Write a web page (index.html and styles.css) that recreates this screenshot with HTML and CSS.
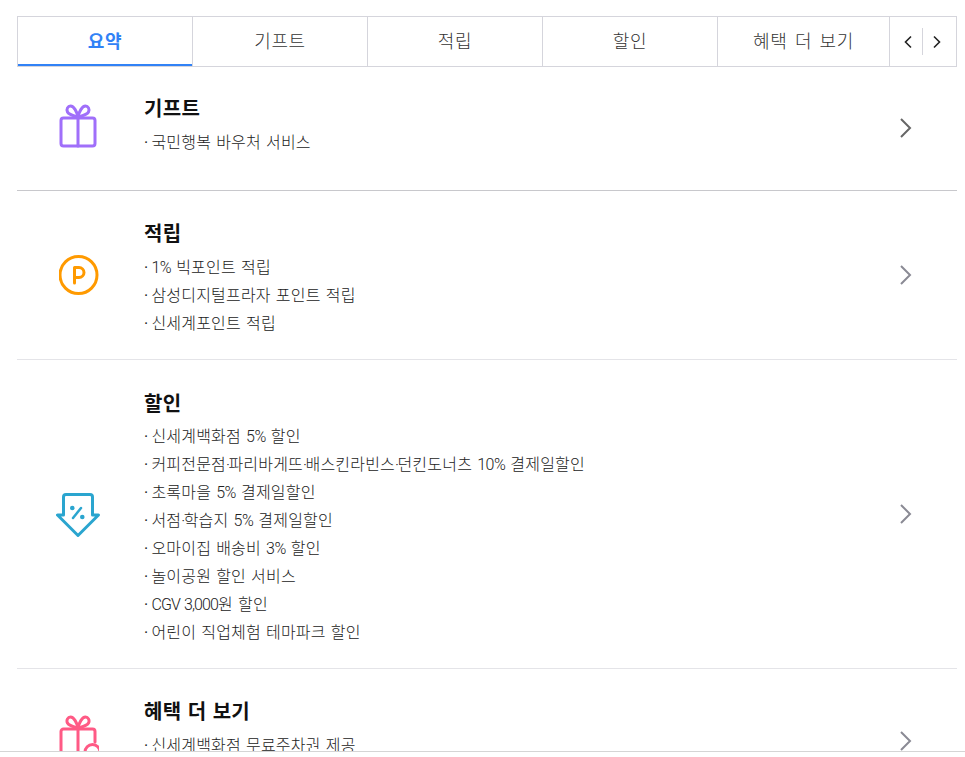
FILE: index.html
```html
<!DOCTYPE html>
<html lang="ko">
<head>
<meta charset="utf-8">
<title>혜택</title>
<link rel="stylesheet" href="styles.css">
</head>
<body>
<main class="page">
  <nav class="tabs">
    <a class="tab active">요약</a>
    <a class="tab">기프트</a>
    <a class="tab">적립</a>
    <a class="tab">할인</a>
    <a class="tab">혜택 더 보기</a>
    <div class="pager">
      <svg class="pager-icon" viewBox="0 0 10 14"><path d="M8 1.500 2.500 7 8 12.500"/></svg>
      <span class="pager-sep"></span>
      <svg class="pager-icon" viewBox="0 0 10 14"><path d="M2 1.500 7.500 7 2 12.500"/></svg>
    </div>
  </nav>

  <section class="item item-gift">
    <svg class="icon" viewBox="0 0 40 46"><g class="st-purple"><rect x="2" y="15" width="34" height="28" rx="2.5"/><path d="M19 15v28M19 14c-3-1-9-2-10.500-5C7 6 9 3 11.500 3 15 3 18 9 19 14c1-5 4-11 7.500-11C29 3 31 6 29.500 9 28 12 22 13 19 14z"/></g></svg>
    <div class="body">
      <h2 class="title">기프트</h2>
      <ul class="list"><li>국민행복 바우처 서비스</li></ul>
    </div>
    <svg class="chev dark" viewBox="0 0 14 22"><path d="M2 2l9 9-9 9"/></svg>
  </section>

  <section class="item item-save">
    <svg class="icon" viewBox="0 0 40 46"><g class="st-orange"><circle cx="19.500" cy="23" r="18.500"/><path d="M15.500 31V15.500H20a5 5 0 0 1 0 10h-4.500"/></g></svg>
    <div class="body">
      <h2 class="title">적립</h2>
      <ul class="list">
        <li><span class="lat">1%</span> 빅포인트 적립</li>
        <li>삼성디지털프라자 포인트 적립</li>
        <li>신세계포인트 적립</li>
      </ul>
    </div>
    <svg class="chev" viewBox="0 0 14 22"><path d="M2 2l9 9-9 9"/></svg>
  </section>

  <section class="item item-sale">
    <svg class="icon" viewBox="0 0 44 46"><g class="st-blue"><path d="M7.500 24V6A2.500 2.500 0 0 1 10 3.500h24A2.500 2.500 0 0 1 36.500 6v18h6L22 44.500 1.500 24z"/><path class="pct" d="M25 17 17 27"/></g><circle class="dot" cx="16.300" cy="17" r="2.300"/><circle class="dot" cx="26.300" cy="26" r="2.300"/></svg>
    <div class="body">
      <h2 class="title">할인</h2>
      <ul class="list">
        <li>신세계백화점 <span class="lat">5%</span> 할인</li>
        <li>커피전문점<span class="mid">·</span>파리바게뜨<span class="mid">·</span>배스킨라빈스<span class="mid">·</span>던킨도너츠 <span class="lat">10%</span> 결제일할인</li>
        <li>초록마을 <span class="lat">5%</span> 결제일할인</li>
        <li>서점<span class="mid">·</span>학습지 <span class="lat">5%</span> 결제일할인</li>
        <li>오마이집 배송비 <span class="lat">3%</span> 할인</li>
        <li>놀이공원 할인 서비스</li>
        <li><span class="lat-tight">CGV 3,000</span>원 할인</li>
        <li>어린이 직업체험 테마파크 할인</li>
      </ul>
    </div>
    <svg class="chev" viewBox="0 0 14 22"><path d="M2 2l9 9-9 9"/></svg>
  </section>

  <section class="item item-more">
    <svg class="icon" viewBox="0 0 40 46"><g class="st-pink"><path d="M22 43H4.500A2.500 2.500 0 0 1 2 40.500V17.500A2.500 2.500 0 0 1 4.500 15h29a2.500 2.500 0 0 1 2.500 2.500V28"/><path d="M19 15v28M19 14c-3-1-9-2-10.500-5C7 6 9 3 11.500 3 15 3 18 9 19 14c1-5 4-11 7.500-11C29 3 31 6 29.500 9 28 12 22 13 19 14z"/><circle cx="33.500" cy="38" r="7.500"/></g></svg>
    <div class="body">
      <h2 class="title">혜택 더 보기</h2>
      <ul class="list"><li>신세계백화점 무료주차권 제공</li></ul>
    </div>
    <svg class="chev" viewBox="0 0 14 22"><path d="M2 2l9 9-9 9"/></svg>
  </section>
</main>
<div class="bottom-bar"></div>
</body>
</html>
```

FILE: styles.css
```css
* { box-sizing: border-box; }
html, body { margin: 0; height: 100%; overflow: hidden; background: #fff; }
body { font-family: Roboto, "Noto Sans CJK KR", sans-serif; color: #222; }
.page { padding: 16px 8px 0 17px; }

.tabs {
  display: flex;
  height: 51px;
  border: 1px solid #d5d5dc;
}
.tab {
  width: 175px;
  display: flex;
  align-items: center;
  justify-content: center;
  padding-bottom: 4px;
  border-right: 1px solid #d5d5dc;
  font-size: 18px;
  font-weight: 300;
  color: #333;
  letter-spacing: 0.6px;
  word-spacing: 2.5px;
}
.tab.active {
  color: #3182f6;
  font-weight: 700;
  box-shadow: inset 0 -2px 0 #3182f6;
}
.tab:nth-child(5) { width: 172px; }
.pager { flex: 1; display: flex; align-items: center; justify-content: center; gap: 9px; padding-right: 1px; }
.pager-icon { width: 10px; height: 14px; fill: none; stroke: #222; stroke-width: 1.6; }
.pager-sep { width: 1px; height: 27px; background: #d5d5dc; }

.item {
  display: flex;
  align-items: center;
  width: 940px;
  border-bottom: 1px solid #e4e4e8;
}
.item-gift { height: 124px; align-items: flex-start; border-bottom-color: #c8c8cc; }
.item-save { height: 169px; }
.item-sale { height: 309px; }
.item-more { height: 120px; align-items: flex-start; border-bottom: 0; }
.icon { flex: none; width: 40px; height: 46px; margin-left: 42px; }
.item-sale .icon { width: 44px; margin-left: 39px; }
.item-gift .icon { margin-top: 36px; }
.item-more .icon { margin-top: 45px; }
.icon g { fill: none; stroke-width: 3; stroke-linecap: round; stroke-linejoin: round; }
.icon .pct { stroke-width: 2.5; }
.st-purple { stroke: #a06ffa; }
.st-orange { stroke: #ff9a00; }
.st-blue { stroke: #2aa5cf; }
.st-pink { stroke: #ff5a85; }
.dot { fill: #2aa5cf; }
.body { flex: 1; margin-left: 45px; }
.item-sale .body { margin-left: 44px; }
.item-gift .body { padding-top: 28px; }
.item-save .body { padding-top: 8px; }
.item-sale .body { padding-top: 9px; }
.item-more .body { padding-top: 29px; }
.title { margin: 0 0 6px; font-size: 20px; line-height: 28px; font-weight: 700; color: #111; letter-spacing: 0.3px; word-spacing: 1px; }
.item-sale .title { margin-bottom: 5px; }
.list { margin: 0; padding: 0; list-style: none; }
.list li { font-size: 16px; font-weight: 300; line-height: 28px; color: #222; letter-spacing: 0.2px; word-spacing: 1px; }
.list li::before { content: "·"; margin-right: 3px; font-weight: 400; }
.lat { letter-spacing: -0.5px; }
.lat-tight { letter-spacing: -0.9px; }
.mid { letter-spacing: -1.5px; }
.chev { flex: none; width: 14px; height: 22px; margin-right: 44px; fill: none; stroke: #8a8a94; stroke-width: 2; }
.chev.dark { stroke: #666; margin-top: 50px; }
.item-more .chev { margin-top: 61px; }
.bottom-bar { position: fixed; left: 0; right: 0; bottom: 0; height: 6px; background: #fff; border-top: 1px solid #d5d5d5; }
```
